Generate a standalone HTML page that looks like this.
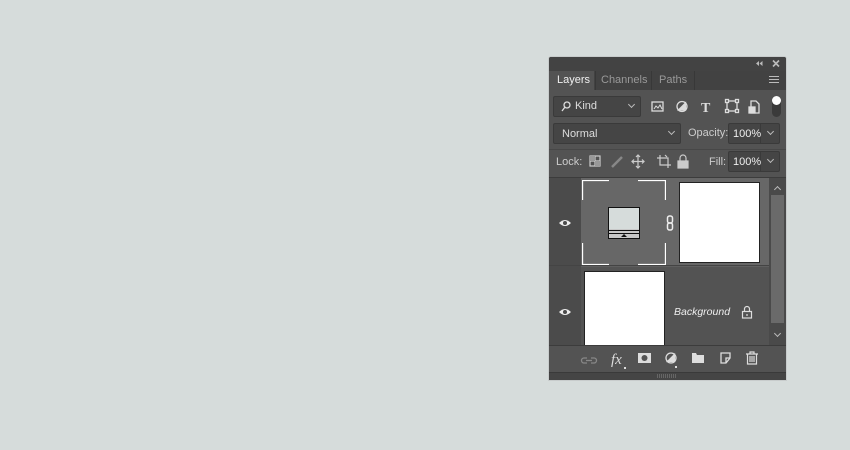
<!DOCTYPE html>
<html><head><style>
*{margin:0;padding:0;box-sizing:border-box}
body{width:850px;height:450px;background:#d6dcdb;position:relative;overflow:hidden;font-family:"Liberation Sans",sans-serif;font-size:11px;color:#dcdcdc}
.a{position:absolute}
.box{position:absolute;background:#454545;border:1px solid #3a3a3a;border-radius:2px}
.chev{position:absolute;width:5px;height:5px;border-right:1px solid #bbb;border-bottom:1px solid #bbb;transform:rotate(45deg)}
</style></head><body>
<div class="a" style="left:549px;top:57px;width:237px;height:323px;background:#535353;border-radius:2px 2px 0 0;box-shadow:0 0 0 1px #c8cccc"></div>
<div class="a" style="left:549px;top:57px;width:237px;height:14px;background:#434343;border-radius:2px 2px 0 0"></div>
<svg class="a" style="left:753px;top:59px" width="30" height="9" fill="#bbb"><path d="M3 4.5L6 2V7ZM6.5 4.5L9.5 2V7Z"/><path d="M20 1.5l6 6M26 1.5l-6 6" stroke="#bbb" stroke-width="1.6"/></svg>
<div class="a" style="left:549px;top:71px;width:237px;height:19px;background:#424242"></div>
<div class="a" style="left:549px;top:71px;width:45px;height:20px;background:#535353"></div>
<div class="a" style="left:557px;top:74px;color:#f0f0f0">Layers</div>
<div class="a" style="left:595px;top:71px;width:1px;height:19px;background:#383838"></div>
<div class="a" style="left:601px;top:74px;color:#999">Channels</div>
<div class="a" style="left:651px;top:71px;width:1px;height:19px;background:#383838"></div>
<div class="a" style="left:659px;top:74px;color:#999">Paths</div>
<div class="a" style="left:694px;top:71px;width:1px;height:19px;background:#383838"></div>
<div class="a" style="left:769px;top:76px;width:10px;height:1px;background:#bbb;box-shadow:0 3px #bbb,0 6px #bbb"></div>
<div class="box" style="left:553px;top:96px;width:88px;height:21px"></div>
<svg class="a" style="left:561px;top:101px" width="10" height="11" fill="none" stroke="#ddd" stroke-width="1.3"><circle cx="6" cy="4" r="3"/><path d="M4 6L1 10"/></svg>
<div class="a" style="left:575px;top:100px;color:#ddd">Kind</div>
<div class="chev" style="left:629px;top:102px"></div>
<svg class="a" style="left:648px;top:97px" width="130" height="20" fill="none" stroke="#ddd" stroke-width="1.3">
<rect x="4" y="5" width="11" height="9"/><path d="M6 12l2-3 2 2 2-3 2 4" stroke-width="1"/>
<circle cx="34" cy="9.5" r="5" /><path d="M30.5 13L37.5 6V13Z" fill="#ddd"/>
<text x="53" y="15" font-family="Liberation Serif" font-size="14" font-weight="bold" fill="#ddd" stroke="none">T</text>
<rect x="79" y="4" width="10" height="10"/><rect x="77.5" y="2.5" width="3" height="3" fill="#535353"/><rect x="87.5" y="2.5" width="3" height="3" fill="#535353"/><rect x="77.5" y="12.5" width="3" height="3" fill="#535353"/><rect x="87.5" y="12.5" width="3" height="3" fill="#535353"/>
<path d="M103 4h5l3 3v9h-8z"/><rect x="101" y="10" width="6" height="6" fill="#ddd"/>
</svg>
<div class="a" style="left:772px;top:96px;width:9px;height:21px;border-radius:5px;background:#3a3a3a"></div>
<div class="a" style="left:772px;top:96px;width:9px;height:9px;border-radius:5px;background:#fff"></div>
<div class="box" style="left:553px;top:123px;width:128px;height:21px"></div>
<div class="a" style="left:562px;top:128px;color:#ddd">Normal</div>
<div class="chev" style="left:669px;top:129px"></div>
<div class="a" style="left:688px;top:127px;color:#ccc">Opacity:</div>
<div class="box" style="left:728px;top:123px;width:52px;height:21px"></div>
<div class="a" style="left:760px;top:124px;width:1px;height:19px;background:#3a3a3a"></div>
<div class="a" style="left:733px;top:128px;color:#eee">100%</div>
<div class="chev" style="left:768px;top:129px"></div>
<div class="a" style="left:549px;top:149px;width:237px;height:1px;background:#474747"></div>
<div class="a" style="left:556px;top:156px;color:#ccc">Lock:</div>
<svg class="a" style="left:586px;top:152px" width="110" height="20" fill="none" stroke="#ccc" stroke-width="1.2">
<rect x="4" y="4" width="10" height="10"/><path d="M4 9h10M9 4v10" /><rect x="4" y="4" width="5" height="5" fill="#999" stroke="none"/><rect x="9" y="9" width="5" height="5" fill="#999" stroke="none"/>
<path d="M26 15l10-10" stroke="#888" stroke-width="2.5"/>
<path d="M52 3v13M45.5 9.5h13M50 5l2-2 2 2M50 14l2 2 2-2M48 7.5l-2 2 2 2M56 7.5l2 2-2 2"/>
<path d="M71 6h11v10M74 3v10h11" /><path d="M79 3l2 2"/>
<rect x="92" y="9" width="10" height="7" fill="#ccc"/><path d="M94 9V6a3 3 0 0 1 6 0v3"/>
</svg>
<div class="a" style="left:709px;top:156px;color:#ccc">Fill:</div>
<div class="box" style="left:728px;top:151px;width:52px;height:21px"></div>
<div class="a" style="left:760px;top:152px;width:1px;height:19px;background:#3a3a3a"></div>
<div class="a" style="left:733px;top:156px;color:#eee">100%</div>
<div class="chev" style="left:768px;top:157px"></div>
<div class="a" style="left:549px;top:177px;width:237px;height:1px;background:#3c3c3c"></div>
<div class="a" style="left:549px;top:178px;width:32px;height:167px;background:#4b4b4b"></div>
<div class="a" style="left:581px;top:178px;width:188px;height:88px;background:#676767"></div>
<div class="a" style="left:549px;top:265px;width:220px;height:1px;background:#444"></div>
<div class="a" style="left:581px;top:266px;width:188px;height:1px;background:#5f5f5f"></div>
<svg class="a" style="left:558px;top:218px" width="14" height="10"><path d="M1 5Q7 -1 13 5Q7 11 1 5Z" fill="#eee"/><circle cx="7" cy="5" r="2" fill="#4b4b4b"/></svg>
<svg class="a" style="left:558px;top:307px" width="14" height="10"><path d="M1 5Q7 -1 13 5Q7 11 1 5Z" fill="#eee"/><circle cx="7" cy="5" r="2" fill="#4b4b4b"/></svg>
<svg class="a" style="left:582px;top:180px" width="84" height="85" fill="none" stroke="#fff" stroke-width="1.3">
<path d="M0.5 20V0.5H27M56 0.5H83.5V20M0.5 63V84.5H27M56 84.5H83.5V63"/>
<rect x="26.5" y="27.5" width="31" height="31" fill="#d6dcdb" stroke="#111" stroke-width="1"/>
<rect x="27" y="49" width="30" height="9" fill="#c8c8c8" stroke="none"/>
<path d="M27 50.5h30M27 53.5h30" stroke="#111" stroke-width="1"/>
<path d="M39 57l3-3 3 3z" fill="#111" stroke="none"/>
</svg>
<svg class="a" style="left:666px;top:215px" width="9" height="16" fill="none" stroke="#eee" stroke-width="1.5"><rect x="1.5" y="1" width="5" height="7" rx="2"/><rect x="1.5" y="8" width="5" height="7" rx="2"/></svg>
<div class="a" style="left:679px;top:182px;width:81px;height:81px;background:#fff;border:1px solid #222"></div>
<div class="a" style="left:584px;top:271px;width:81px;height:74px;background:#fff;border:1px solid #222;border-bottom:none"></div>
<div class="a" style="left:674px;top:306px;color:#eee;font-style:italic;font-size:10.5px">Background</div>
<svg class="a" style="left:741px;top:305px" width="12" height="14" fill="none" stroke="#ddd" stroke-width="1.2"><rect x="1.5" y="6.5" width="9" height="6.5"/><path d="M3.5 6.5V4a2.5 2.5 0 0 1 5 0v2.5"/><path d="M6 9v2"/></svg>
<div class="a" style="left:769px;top:178px;width:17px;height:167px;background:#4a4a4a"></div>
<div class="a" style="left:771px;top:195px;width:13px;height:128px;background:#6a6a6a"></div>
<div class="chev" style="left:775px;top:187px;transform:rotate(-135deg)"></div>
<div class="chev" style="left:775px;top:331px"></div>
<div class="a" style="left:549px;top:345px;width:237px;height:1px;background:#3c3c3c"></div>
<svg class="a" style="left:580px;top:348px" width="185" height="22" fill="none" stroke="#ddd" stroke-width="1.3">
<path d="M7 10h-3a2.5 2.5 0 0 0 0 5h3M11 10h3a2.5 2.5 0 0 1 0 5h-3M6 12.5h6" stroke="#888"/>
<text x="31" y="16" font-family="Liberation Serif" font-style="italic" font-size="15" fill="#ddd" stroke="none">fx</text>
<rect x="44" y="19" width="2" height="2" fill="#ddd" stroke="none"/>
<rect x="58" y="5" width="13" height="10" fill="#ddd" stroke="none"/><circle cx="64.5" cy="10" r="3" fill="#535353" stroke="none"/>
<circle cx="91" cy="10" r="5"/><path d="M87.5 13.5L94.5 6.5V13.5Z" fill="#ddd"/><rect x="95" y="18" width="2" height="2" fill="#ddd" stroke="none"/>
<path d="M112 5h4l1 2h7v8h-12z" fill="#ddd" stroke="none"/>
<path d="M141 5h9v5l-4 5h-5z"/><path d="M150 10h-4v5"/>
<path d="M166 6h12M170 6V4h4v2M167.5 6v10h9V6M170 8v6M172 8v6M174 8v6" stroke-width="1.2"/>
</svg>
<div class="a" style="left:549px;top:372px;width:237px;height:8px;background:#454545;border-top:1px solid #3a3a3a"></div>
<div class="a" style="left:657px;top:374px;width:20px;height:4px;background:repeating-linear-gradient(90deg,#666 0 1px,transparent 1px 2px)"></div>
</body></html>
